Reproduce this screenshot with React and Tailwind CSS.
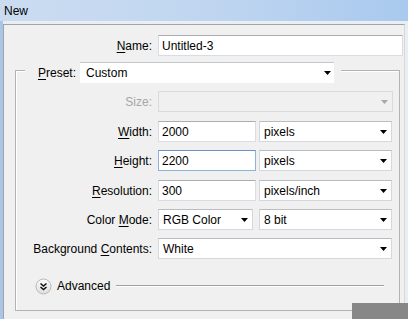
const Arrow = ({ color = "#000" }) => (
  <svg width="7" height="4" viewBox="0 0 7 4" className="shrink-0">
    <polygon points="0,0 7,0 3.5,4" fill={color} />
  </svg>
);

const Select = ({ w, value }) => (
  <div className={`h-[21px] ${w} flex items-center justify-between bg-white border border-[#d4d7db] border-t-[#b9bcc1] pl-[4px] pr-[4px]`}>
    <span>{value}</span>
    <Arrow />
  </div>
);

const Input = ({ w, value, focused }) => (
  <div
    className={`h-[21px] ${w} flex items-center bg-white border pl-[3px] ${
      focused ? "border-[#8fb1d8] border-t-[#6f93c0]" : "border-[#d9dde3] border-t-[#abadb3]"
    }`}
  >
    {value}
  </div>
);

const Row = ({ label, mt, children, dim }) => (
  <div className={`flex items-center ${mt}`}>
    <div className={`w-[142px] pr-[6px] text-right ${dim ? "text-[#a6a6a6]" : ""}`}>{label}</div>
    {children}
  </div>
);

const U = ({ children }) => <span className="underline underline-offset-[2px]">{children}</span>;

export default function App() {
  return (
    <div
      className="relative w-[408px] h-[319px] overflow-hidden bg-[#f0f0f0] text-[12px] leading-[14px] text-black"
      style={{ fontFamily: '"Liberation Sans", Arial, sans-serif' }}
    >
      <div className="h-[21px] flex items-center pl-[4px] bg-gradient-to-r from-[#cbdcf1] via-[#c0d6f0] to-[#a9c9ee] text-[12px]">
        New
      </div>
      <div className="flex h-[298px]">
        <div className="w-[3px] bg-[#a9c5e7]" />
        <div className="flex-1 pt-[3px] bg-[#e9eef4]">
          <div className="h-[300px] w-[402px] border border-[#a3a3a3] border-r-[#d8d8d8] bg-[#f0f0f0]">
            <div className="flex items-center mt-[10px]">
              <div className="w-[154px] pr-[6px] text-right">
                <U>N</U>ame:
              </div>
              <Input w="w-[245px]" value="Untitled-3" />
            </div>

            <div className="ml-[11px] mt-[14px] w-[385px] border border-[#b3b3b3] shadow-[inset_1px_1px_0_#ffffff] pb-[16px]">
              <div className="-mt-[9px] ml-[9px] w-fit flex items-center bg-[#f0f0f0] pl-[13px] pr-[7px]">
                <span className="mr-[4px]">
                  <U>P</U>reset:
                </span>
                <div className="h-[21px] w-[254px] flex items-center justify-between bg-white border-t border-[#c3c6ca] pl-[6px] pr-[3px]">
                  <span>Custom</span>
                  <Arrow />
                </div>
              </div>

              <Row label="Size:" mt="mt-[8px]" dim>
                <div className="h-[21px] w-[235px] flex items-center justify-end bg-[#f0f0f0] border border-[#dadada] pr-[4px]">
                  <Arrow color="#a8a8a8" />
                </div>
              </Row>

              <Row label={<><U>W</U>idth:</>} mt="mt-[9px]">
                <Input w="w-[98px]" value="2000" />
                <div className="ml-[3px]">
                  <Select w="w-[133px]" value="pixels" />
                </div>
              </Row>

              <Row label={<><U>H</U>eight:</>} mt="mt-[8px]">
                <Input w="w-[98px]" value="2200" focused />
                <div className="ml-[3px]">
                  <Select w="w-[133px]" value="pixels" />
                </div>
              </Row>

              <Row label={<><U>R</U>esolution:</>} mt="mt-[9px]">
                <Input w="w-[98px]" value="300" />
                <div className="ml-[3px]">
                  <Select w="w-[133px]" value="pixels/inch" />
                </div>
              </Row>

              <Row label={<>Color <U>M</U>ode:</>} mt="mt-[8px]">
                <Select w="w-[95px]" value="RGB Color" />
                <div className="ml-[6px]">
                  <Select w="w-[133px]" value="8 bit" />
                </div>
              </Row>

              <Row label={<>Background <U>C</U>ontents:</>} mt="mt-[8px]">
                <Select w="w-[234px]" value="White" />
              </Row>

              <div className="flex items-center mt-[19px] ml-[19px] mr-[15px] h-[16px]">
                <svg width="17" height="17" viewBox="0 0 17 17" className="shrink-0">
                  <defs>
                    <linearGradient id="adv" x1="0" y1="0" x2="0" y2="1">
                      <stop offset="0" stopColor="#ffffff" />
                      <stop offset="1" stopColor="#dcdcdc" />
                    </linearGradient>
                  </defs>
                  <circle cx="8.5" cy="8.5" r="7.5" fill="url(#adv)" stroke="#b8b8b8" />
                  <path d="M5.5 5.5 L8.5 8 L11.5 5.5 M5.5 9 L8.5 11.5 L11.5 9" fill="none" stroke="#111" strokeWidth="1.5" />
                </svg>
                <span className="ml-[5px]">Advanced</span>
                <div className="flex-1 ml-[6px] border-t border-[#a0a0a0] border-b border-b-white" />
              </div>
            </div>
          </div>
        </div>
      </div>
      <div className="absolute left-[352px] top-[303px] w-[56px] h-[16px] bg-[#878787]" />
    </div>
  );
}
